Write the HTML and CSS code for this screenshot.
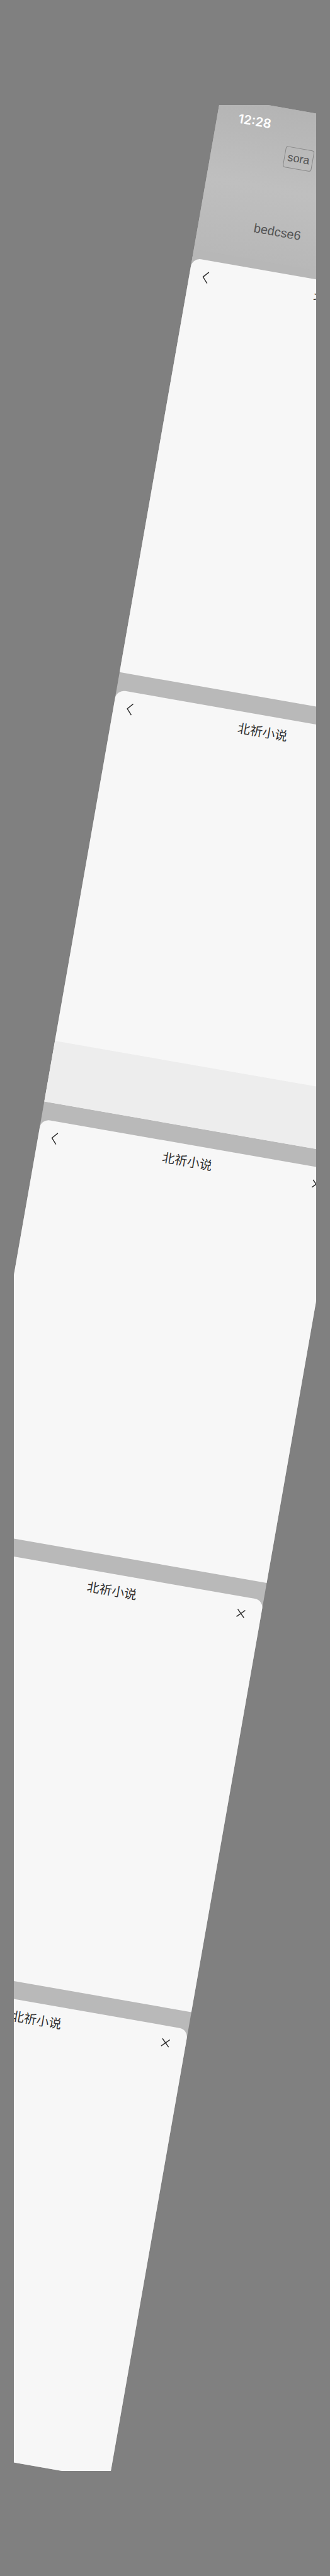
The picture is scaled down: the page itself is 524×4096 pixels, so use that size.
FILE: index.html
```html
<!DOCTYPE html>
<html lang="zh-CN">
<head>
<meta charset="utf-8">
<meta name="viewport" content="width=device-width, initial-scale=1">
<title>北祈小说</title>
<link rel="stylesheet" href="styles.css">
</head>
<body>
<svg class="symbols" aria-hidden="true">
  <symbol id="back" viewBox="0 0 10 20"><path d="M9 1 1 10l8 9"/></symbol>
  <symbol id="close" viewBox="0 0 14 14"><path d="m1 1 12 12M13 1 1 13"/></symbol>
</svg>
<main class="frame">
  <div class="board">
    <div class="hero">
      <time class="clock">12:28</time>
      <button class="tag" type="button">sora</button>
      <p class="code">bedcse6</p>
    </div>
    <section class="sheet">
      <header class="bar">
        <button class="icon" type="button" aria-label="返回"><svg class="back"><use href="#back"/></svg></button>
        <h2 class="title">北祈小说</h2>
        <button class="icon" type="button" aria-label="关闭"><svg class="close"><use href="#close"/></svg></button>
      </header>
    </section>
    <section class="sheet">
      <header class="bar">
        <button class="icon" type="button" aria-label="返回"><svg class="back"><use href="#back"/></svg></button>
        <h2 class="title">北祈小说</h2>
        <button class="icon" type="button" aria-label="关闭"><svg class="close"><use href="#close"/></svg></button>
      </header>
      <div class="footer"></div>
    </section>
    <section class="sheet">
      <header class="bar">
        <button class="icon" type="button" aria-label="返回"><svg class="back"><use href="#back"/></svg></button>
        <h2 class="title">北祈小说</h2>
        <button class="icon" type="button" aria-label="关闭"><svg class="close"><use href="#close"/></svg></button>
      </header>
    </section>
    <section class="sheet">
      <header class="bar">
        <button class="icon" type="button" aria-label="返回"><svg class="back"><use href="#back"/></svg></button>
        <h2 class="title">北祈小说</h2>
        <button class="icon" type="button" aria-label="关闭"><svg class="close"><use href="#close"/></svg></button>
      </header>
    </section>
    <section class="sheet sheet-last">
      <header class="bar">
        <button class="icon" type="button" aria-label="返回"><svg class="back"><use href="#back"/></svg></button>
        <h2 class="title">北祈小说</h2>
        <button class="icon" type="button" aria-label="关闭"><svg class="close"><use href="#close"/></svg></button>
      </header>
    </section>
  </div>
</main>
</body>
</html>
```
FILE: styles.css
```css
* {
  box-sizing: border-box;
}

body {
  margin: 0;
  padding: 167px 22px;
  background: #808080;
  color: #333;
  font-family: "Liberation Sans", "Noto Sans CJK SC", sans-serif;
}

.symbols {
  position: absolute;
  width: 0;
  height: 0;
}

.frame {
  overflow: hidden;
}

.board {
  display: flex;
  flex-direction: column;
  gap: 28px;
  background: #b9b9b9;
  transform: rotate(9.94deg);
}

.hero {
  display: grid;
  grid-template-columns: 1fr;
  align-content: start;
  height: 260px;
  padding: 16px 32px;
  background: linear-gradient(#b4b4b4, #bfbfbf 50%, #b7b7b7);
}

.clock {
  padding-left: 2px;
  color: #fff;
  font: 600 20px/26px Inter, sans-serif;
}

.tag {
  justify-self: start;
  width: 46px;
  height: 34px;
  margin: 17px 0 0 84px;
  padding: 0;
  border: 1px solid #888;
  border-radius: 4px;
  background: transparent;
  color: #555;
  font: 18px/24px "Liberation Sans", sans-serif;
}

.code {
  margin: 90px 0 0 56px;
  color: #555;
  font-size: 20px;
  line-height: 26px;
}

.sheet {
  display: flex;
  flex-direction: column;
  justify-content: space-between;
  height: 665px;
  border-radius: 14px 14px 0 0;
  background: #f7f7f7;
  overflow: hidden;
}

.hero + .sheet {
  height: 669px;
  margin-top: -28px;
  box-shadow: 0 -14px 0 #b7b7b7;
}

.sheet-last {
  height: 726px;
}

.bar {
  display: flex;
  align-items: center;
  justify-content: space-between;
  height: 54px;
  padding: 0 14px;
}

.icon {
  display: grid;
  place-items: center;
  width: 36px;
  height: 36px;
  padding: 0;
  border: 0;
  border-radius: 50%;
  background: transparent;
}

.icon:first-child {
  width: 24px;
  margin-right: 12px;
}

.back,
.close {
  fill: none;
  stroke: #333;
  stroke-width: 1.5;
}

.back {
  width: 10px;
  height: 20px;
}

.close {
  width: 14px;
  height: 14px;
}

.title {
  margin: 0;
  font-size: 20px;
  font-weight: 400;
  line-height: 28px;
}

.footer {
  height: 98px;
  background: #ededed;
}
```
